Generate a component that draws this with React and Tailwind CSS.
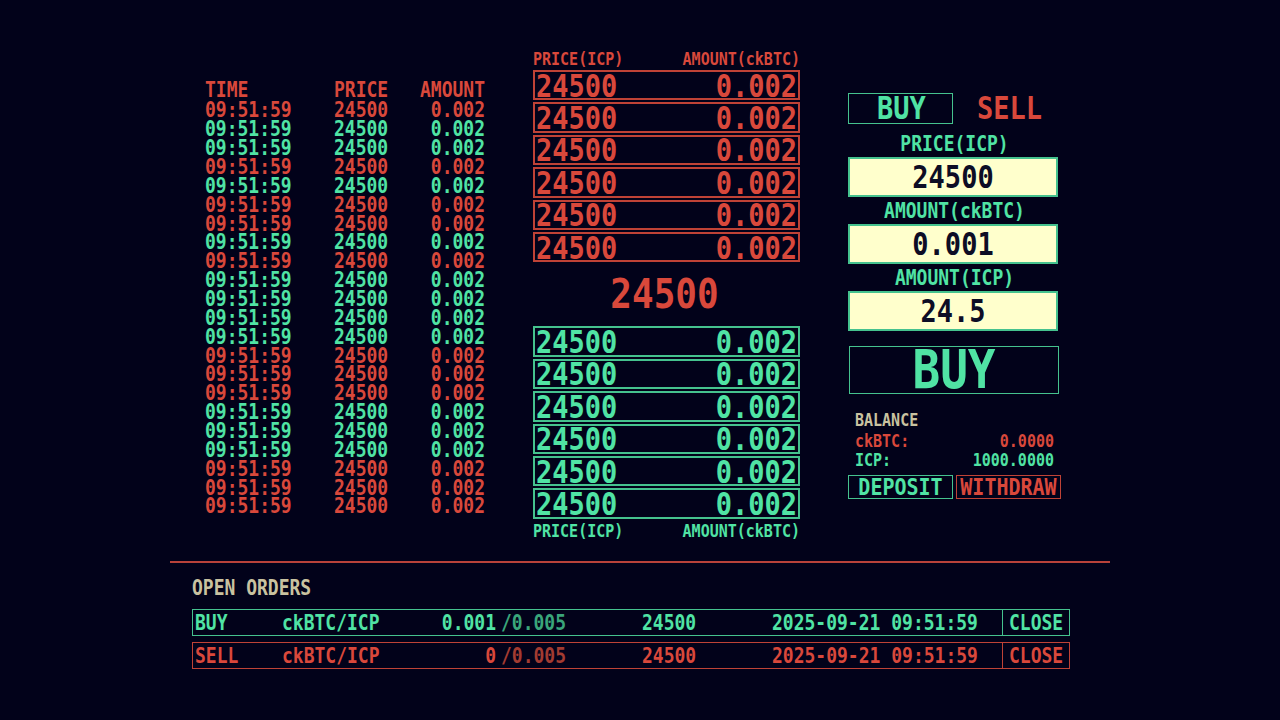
const trades = [
  "s", "b", "b", "s", "b", "s", "s", "b", "s", "b", "b",
  "b", "b", "s", "s", "s", "b", "b", "b", "s", "s", "s",
];

const tone = {
  b: "text-[#50e3a4]",
  s: "text-[#d9483b]",
};

function Tall({ children, className = "" }) {
  return <span className={`inline-block scale-y-[1.15] leading-none ${className}`}>{children}</span>;
}

function TradeList() {
  return (
    <div className="w-[280px] mt-[30px] text-[18px] font-bold">
      <div className="flex h-[20px] items-center text-[#d9483b]">
        <Tall className="w-[129px]">TIME</Tall>
        <Tall className="w-[60px]">PRICE</Tall>
        <Tall className="flex-1 text-right">AMOUNT</Tall>
      </div>
      <div className="mt-[1px]">
        {trades.map((side, i) => (
          <div key={i} className={`flex h-[18.86px] items-center ${tone[side]}`}>
            <Tall className="w-[129px] !leading-[16px]">09:51:59</Tall>
            <Tall className="w-[60px] !leading-[16px]">24500</Tall>
            <Tall className="flex-1 text-right !leading-[16px]">0.002</Tall>
          </div>
        ))}
      </div>
    </div>
  );
}

function BookLabel({ color }) {
  return (
    <div className={`flex h-[18px] items-center justify-between text-[15px] font-bold ${color}`}>
      <Tall>PRICE(ICP)</Tall>
      <Tall>AMOUNT(ckBTC)</Tall>
    </div>
  );
}

function BookRow({ side }) {
  const box =
    side === "s"
      ? "border-[#bf4236] text-[#d9483b]"
      : "border-[#45c28e] text-[#50e3a4]";
  return (
    <div className={`flex h-[30.4px] items-center justify-between border-2 px-[1px] pt-[2px] text-[27px] font-bold ${box}`}>
      <Tall>24500</Tall>
      <Tall>0.002</Tall>
    </div>
  );
}

function OrderBook() {
  return (
    <div className="w-[267px]">
      <BookLabel color="text-[#d9483b]" />
      <div className="mt-[2px] flex flex-col gap-[2px]">
        {[0, 1, 2, 3, 4, 5].map((i) => (
          <BookRow key={i} side="s" />
        ))}
      </div>
      <div className="flex h-[64px] items-center justify-center text-[36px] font-bold text-[#d9483b]">
        <Tall className="-ml-[4px]">24500</Tall>
      </div>
      <div className="flex flex-col gap-[2px]">
        {[0, 1, 2, 3, 4, 5].map((i) => (
          <BookRow key={i} side="b" />
        ))}
      </div>
      <div className="mt-[4px]">
        <BookLabel color="text-[#50e3a4]" />
      </div>
    </div>
  );
}

function Field({ label, value, first }) {
  return (
    <>
      <div className={`flex h-[22px] items-center justify-center text-[18px] font-bold text-[#50e3a4] ${first ? "mt-[9px]" : "mt-[3px]"}`}>
        <Tall>{label}</Tall>
      </div>
      <div className="mt-[2px] flex h-[40px] w-[210px] items-center justify-center border-2 border-[#45c28e] bg-[#ffffcc] text-[27px] font-bold text-[#0d0d25]">
        <Tall>{value}</Tall>
      </div>
    </>
  );
}

function TradePanel() {
  return (
    <div className="w-[213px] mt-[43px]">
      <div className="flex">
        <div className="flex h-[31px] w-[105px] items-center justify-center border-[1.5px] border-[#45c28e] pl-[2px] text-[27px] font-bold text-[#50e3a4]">
          <Tall>BUY</Tall>
        </div>
        <div className="ml-[3px] flex h-[31px] w-[105px] items-center justify-center pl-[2px] text-[27px] font-bold text-[#d9483b]">
          <Tall>SELL</Tall>
        </div>
      </div>
      <Field label="PRICE(ICP)" value="24500" first />
      <Field label="AMOUNT(ckBTC)" value="0.001" />
      <Field label="AMOUNT(ICP)" value="24.5" />
      <button className="ml-[1px] mt-[15px] flex h-[48px] w-[210px] items-center justify-center border-[1.5px] border-[#45c28e] text-[46px] font-bold text-[#50e3a4]">
        <Tall>BUY</Tall>
      </button>
      <div className="mt-[17px] px-[7px] text-[15px] font-bold">
        <div className="flex h-[19px] items-center text-[#c9c2a0]">
          <Tall>BALANCE</Tall>
        </div>
        <div className="mt-[2px] flex h-[19px] items-center justify-between text-[#d9483b]">
          <Tall>ckBTC:</Tall>
          <Tall>0.0000</Tall>
        </div>
        <div className="flex h-[19px] items-center justify-between text-[#50e3a4]">
          <Tall>ICP:</Tall>
          <Tall>1000.0000</Tall>
        </div>
      </div>
      <div className="mt-[5px] flex">
        <button className="flex h-[24px] w-[105px] items-center justify-center border-[1.5px] border-[#45c28e] text-[20px] font-bold text-[#50e3a4]">
          <Tall>DEPOSIT</Tall>
        </button>
        <button className="ml-[3px] flex h-[24px] w-[105px] items-center justify-center border-[1.5px] border-[#bf4236] text-[20px] font-bold text-[#d9483b]">
          <Tall>WITHDRAW</Tall>
        </button>
      </div>
    </div>
  );
}

const orders = [
  { side: "BUY", filled: "0.001", buy: true },
  { side: "SELL", filled: "0", buy: false },
];

function OpenOrders() {
  return (
    <div className="pl-[22px]">
      <div className="mt-[14px] flex h-[22px] items-center text-[18px] font-bold text-[#c9c2a0]">
        <Tall>OPEN ORDERS</Tall>
      </div>
      <div className="mt-[10px] flex flex-col gap-[6px]">
        {orders.map((o) => (
          <div
            key={o.side}
            className={`flex h-[27px] w-[878px] items-center border-[1.5px] pl-[2px] pt-[2px] text-[18px] font-bold ${
              o.buy ? "border-[#45c28e] text-[#50e3a4]" : "border-[#bf4236] text-[#d9483b]"
            }`}
          >
            <Tall className="w-[87px]">{o.side}</Tall>
            <Tall className="w-[120px]">ckBTC/ICP</Tall>
            <Tall className="w-[94px] text-right">{o.filled}</Tall>
            <Tall className={`ml-[5px] w-[141px] ${o.buy ? "text-[#3aa57a]" : "text-[#a33b31]"}`}>/0.005</Tall>
            <Tall className="w-[130px]">24500</Tall>
            <Tall className="w-[230px]">2025-09-21 09:51:59</Tall>
            <div
              className={`-mt-[2px] flex h-[25px] flex-1 items-center border-l-[1.5px] pl-[6px] pt-[2px] ${
                o.buy ? "border-[#45c28e]" : "border-[#bf4236]"
              }`}
            >
              <Tall>CLOSE</Tall>
            </div>
          </div>
        ))}
      </div>
    </div>
  );
}

export default function App() {
  return (
    <div className="min-h-screen w-full bg-[#02021a] font-['DejaVu_Sans_Mono',monospace]">
      <div className="mx-auto w-[940px]">
        <div className="flex h-[561px] items-start gap-[48px] pl-[35px] pt-[50px]">
          <TradeList />
          <OrderBook />
          <TradePanel />
        </div>
        <div className="h-[1.5px] bg-[#b8423a]" />
        <OpenOrders />
      </div>
    </div>
  );
}
